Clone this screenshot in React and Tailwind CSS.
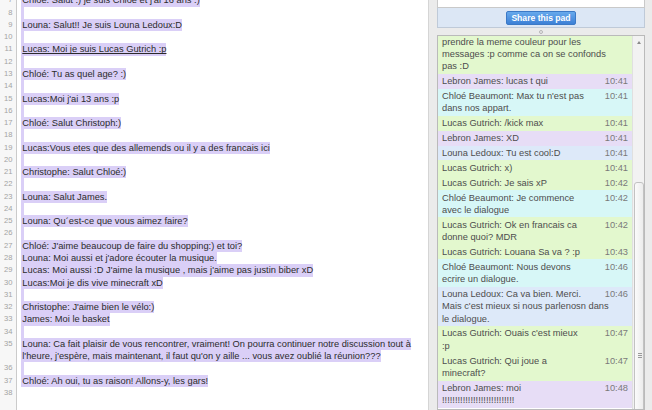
const font = { fontFamily: '"Liberation Sans", Arial, sans-serif' };

const padLines = [
  { n: 7, t: "Chloé: Salut :) je suis Chloé et j'ai 16 ans :)" },
  { n: 8, t: "" },
  { n: 9, t: "Louna: Salut!! Je suis Louna Ledoux:D" },
  { n: 10, t: "" },
  { n: 11, t: "Lucas: Moi je suis Lucas Gutrich :p", u: true },
  { n: 12, t: "" },
  { n: 13, t: "Chloé: Tu as quel age? :)" },
  { n: 14, t: "" },
  { n: 15, t: "Lucas:Moi j'ai 13 ans :p" },
  { n: 16, t: "" },
  { n: 17, t: "Chloé: Salut Christoph:)" },
  { n: 18, t: "" },
  { n: 19, t: "Lucas:Vous etes que des allemends ou il y a des francais ici" },
  { n: 20, t: "" },
  { n: 21, t: "Christophe: Salut Chloé:)" },
  { n: 22, t: "" },
  { n: 23, t: "Louna: Salut James. " },
  { n: 24, t: "" },
  { n: 25, t: "Louna: Qu´est-ce que vous aimez faire?" },
  { n: 26, t: "" },
  { n: 27, t: "Chloé: J'aime beaucoup de faire du shopping:) et toi?" },
  { n: 28, t: "Louna: Moi aussi et j'adore écouter la musique." },
  { n: 29, t: "Lucas: Moi aussi :D J'aime la musique , mais j'aime pas justin biber xD" },
  { n: 30, t: "Lucas:Moi je dis vive minecraft xD" },
  { n: 31, t: "" },
  { n: 32, t: "Christophe: J'aime bien le vélo:)" },
  { n: 33, t: "James: Moi le basket" },
  { n: 34, t: "" },
  {
    n: 35,
    t: [
      "Louna: Ca fait plaisir de vous rencontrer, vraiment! On pourra continuer notre discussion tout à",
      "l'heure, j'espère, mais maintenant, il faut qu'on y aille ... vous avez oublié la réunion???",
    ],
  },
  { n: 36, t: "" },
  { n: 37, t: "Chloé: Ah oui, tu as raison! Allons-y, les gars!" },
  { n: 38, t: "", plain: true },
];

const GREEN = "bg-[#e3f8ce]";
const PURPLE = "bg-[#e7ddf6]";
const CYAN = "bg-[#d7f7f7]";
const BLUE = "bg-[#dde9f9]";

const messages = [
  { c: GREEN, lines: ["prendre la meme couleur pour les", "messages :p comme ca on se confonds", "pas :D"], first: true },
  { c: PURPLE, lines: ["Lebron James: lucas t qui"], time: "10:41" },
  { c: CYAN, lines: ["Chloé Beaumont: Max tu n'est pas", "dans nos appart."], time: "10:41" },
  { c: GREEN, lines: ["Lucas Gutrich: /kick max"], time: "10:41" },
  { c: PURPLE, lines: ["Lebron James: XD"], time: "10:41" },
  { c: BLUE, lines: ["Louna Ledoux: Tu est cool:D"], time: "10:41" },
  { c: GREEN, lines: ["Lucas Gutrich: x)"], time: "10:41" },
  { c: GREEN, lines: ["Lucas Gutrich: Je sais xP"], time: "10:42" },
  { c: CYAN, lines: ["Chloé Beaumont: Je commence", "avec le dialogue"], time: "10:42" },
  { c: GREEN, lines: ["Lucas Gutrich: Ok en francais ca", "donne quoi? MDR"], time: "10:42" },
  { c: GREEN, lines: ["Lucas Gutrich: Louana Sa va ? :p"], time: "10:43" },
  { c: CYAN, lines: ["Chloé Beaumont: Nous devons", "ecrire un dialogue."], time: "10:46" },
  { c: BLUE, lines: ["Louna Ledoux: Ca va bien. Merci.", "Mais c'est mieux si nous parlenosn dans", "le dialogue."], time: "10:46" },
  { c: GREEN, lines: ["Lucas Gutrich: Ouais c'est mieux", ":p"], time: "10:47" },
  { c: GREEN, lines: ["Lucas Gutrich: Qui joue a", "minecraft?"], time: "10:47" },
  { c: PURPLE, lines: ["Lebron James: moi", "!!!!!!!!!!!!!!!!!!!!!!!!!!!!"], time: "10:48" },
];

function PadLine({ text, underline, plain }) {
  return (
    <div className="h-[12.27px] leading-[12.27px] whitespace-nowrap">
      {text ? (
        <span className={`inline-block h-[12.27px] align-top bg-[#dacff7] pl-[1.3px] ${underline ? "underline" : ""}`}>
          {text}
        </span>
      ) : plain ? null : (
        <span className="inline-block h-[12.27px] w-[3px] align-top bg-[#dacff7]" />
      )}
    </div>
  );
}

function Editor() {
  return (
    <div className="w-[428px] h-full bg-white flex overflow-hidden">
      {/* gutter */}
      <div className="w-[17px] shrink-0 h-full bg-[#f7f7f7] border-r border-[#cbcbcb]">
        <div className="mt-[-5.6px] text-[7.6px] text-[#a3a3a3] text-right pr-[3.5px]">
          {padLines.map((l) => (
            <div
              key={l.n}
              className={Array.isArray(l.t) ? "h-[24.54px] leading-[12.27px]" : "h-[12.27px] leading-[12.27px]"}
            >
              {l.n}
            </div>
          ))}
        </div>
      </div>

      {/* text */}
      <div className="flex-1 pl-[4px] mt-[-5.6px] text-[9.3px] text-[#2b2b2b]">
        {padLines.map((l) =>
          Array.isArray(l.t) ? (
            <div key={l.n}>
              {l.t.map((part, i) => (
                <PadLine key={i} text={part} />
              ))}
            </div>
          ) : (
            <PadLine key={l.n} text={l.t} underline={l.u} plain={l.plain} />
          )
        )}
      </div>
    </div>
  );
}

function Chat() {
  return (
    <div className="flex-1 min-h-0 border border-[#bababa] bg-white flex overflow-hidden">
      <div className="flex-1 mt-[-0.5px] text-[9.3px] leading-[12.3px] text-[#4d4d4d]">
        {messages.map((m, i) => (
          <div key={i} className={`${m.c} pl-[4px] pr-[4px] ${m.first ? "pb-[1.3px]" : "py-[1.3px]"}`}>
            {m.lines.map((line, j) => (
              <div key={j} className="flex whitespace-nowrap">
                <span>{line}</span>
                {j === 0 && m.time ? <span className="ml-auto text-[#7a7a7a]">{m.time}</span> : null}
              </div>
            ))}
          </div>
        ))}
      </div>

      {/* scrollbar */}
      <div className="w-[12px] shrink-0 relative bg-[#f2f2f2] border-l border-[#e0e0e0]">
        <div className="absolute left-[3.5px] top-[5px] w-0 h-0 border-l-[2px] border-r-[2px] border-b-[3px] border-l-transparent border-r-transparent border-b-[#8a8a8a]" />
        <div className="absolute left-[1px] right-[0px] top-[146px] h-[300px] rounded-t-[3px] border border-[#c2c2c2] bg-gradient-to-r from-[#fbfbfb] to-[#ececec]">
          <div className="absolute left-[2.5px] top-[170px] w-[4px] flex flex-col gap-[1px]">
            <div className="h-px bg-[#9a9a9a]" />
            <div className="h-px bg-[#9a9a9a]" />
            <div className="h-px bg-[#9a9a9a]" />
          </div>
        </div>
      </div>
    </div>
  );
}

function Sidebar() {
  return (
    <div className="flex-1 h-full bg-[#ebebeb] border-l border-[#d5d5d5] pl-[8px] pr-[7px] flex flex-col">
      <div className="h-[8px] shrink-0 bg-white border-x border-b border-[#c9c9c9]" />
      <div className="h-[20px] shrink-0 bg-[#dce7f5] border-x border-b border-[#bfcad8] flex justify-center pt-[2.5px]">
        <button className="w-[70px] h-[14.5px] rounded-[2px] border border-[#3b79c6] bg-gradient-to-b from-[#67a9ec] to-[#3c80d6] text-white font-bold text-[8.6px] leading-[12px]">
          Share this pad
        </button>
      </div>
      <div className="h-[7px] shrink-0 flex items-center justify-center">
        <div className="w-[4px] h-[4px] rounded-full border border-[#b5b5b5]" />
      </div>
      <Chat />
    </div>
  );
}

export default function App() {
  return (
    <div style={font} className="w-[652px] h-[410px] overflow-hidden flex bg-white">
      <Editor />
      <Sidebar />
    </div>
  );
}
